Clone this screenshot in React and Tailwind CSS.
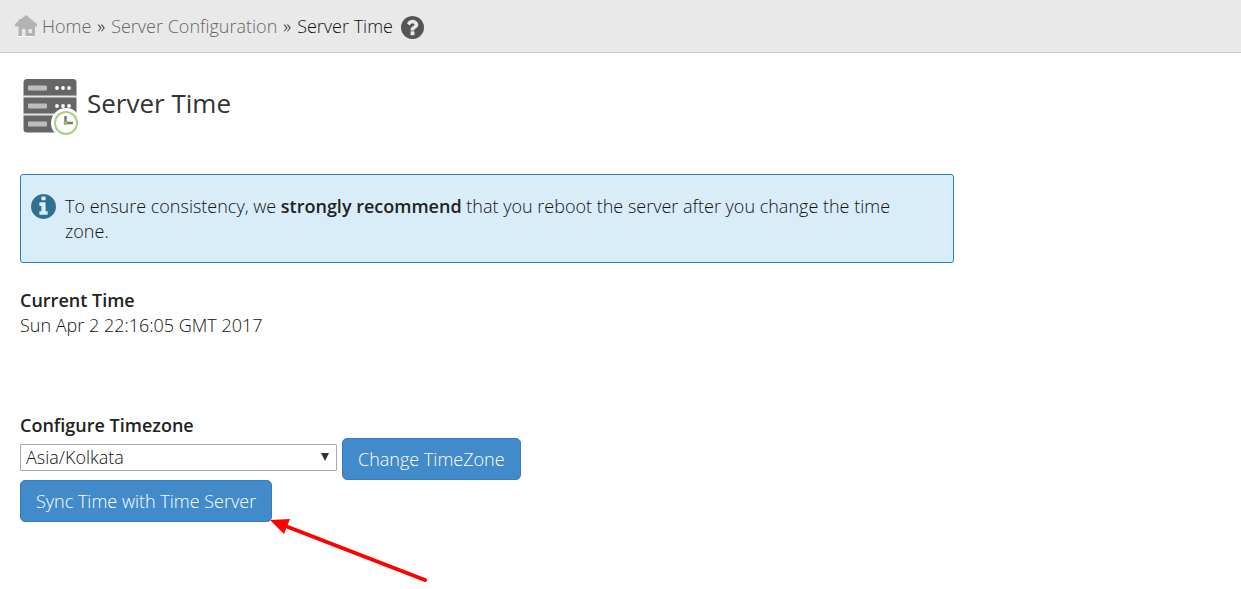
import { useState } from 'react';

const timezones = ['Asia/Kolkata', 'Asia/Dubai', 'Europe/London', 'America/New_York', 'UTC'];

const HomeIcon = () => (
  <svg width="22" height="22" viewBox="0 0 22 22" className="shrink-0" aria-hidden="true">
    <path fill="#f7f7f7" d="M3 21h16v1H3z" />
    <path
      fill="#b3b3b3"
      fillRule="evenodd"
      d="M11 0 22 9v2.5h-2V21h-9.5v-7H7v7H3.5v-9.5H0V9L4 5.500V4h2zM13.500 14v4h3.500v-4z"
    />
  </svg>
);

const HelpIcon = () => (
  <svg width="23" height="23" viewBox="128 128 1536 1536" fill="#555" aria-hidden="true">
    <path d="M1024 1376v-192q0-14-9-23t-23-9h-192q-14 0-23 9t-9 23v192q0 14 9 23t23 9h192q14 0 23-9t9-23zm256-672q0-88-55.5-163t-138.5-116-170-41q-243 0-371 213-15 24 8 42l132 100q7 6 19 6 16 0 25-12 53-68 86-92 34-24 86-24 48 0 85.5 26t37.5 59q0 38-20 61t-68 45q-63 28-115.5 86.5t-52.5 125.5v36q0 14 9 23t23 9h192q14 0 23-9t9-23q0-19 21.5-49.5t54.5-49.5q32-18 49-28.5t46-35 44.5-48 28-60.5 12.5-81zm384 192q0 209-103 385.5t-279.5 279.5-385.5 103-385.5-103-279.5-279.5-103-385.5 103-385.5 279.5-279.5 385.5-103 385.5 103 279.5 279.5 103 385.5z" />
  </svg>
);

const InfoIcon = () => (
  <svg width="25" height="25" viewBox="128 128 1536 1536" fill="#31708f" className="shrink-0" aria-hidden="true">
    <path d="M1152 1376v-160q0-14-9-23t-23-9h-96v-512q0-14-9-23t-23-9h-320q-14 0-23 9t-9 23v160q0 14 9 23t23 9h96v320h-96q-14 0-23 9t-9 23v160q0 14 9 23t23 9h448q14 0 23-9t9-23zm-128-896v-160q0-14-9-23t-23-9h-192q-14 0-23 9t-9 23v160q0 14 9 23t23 9h192q14 0 23-9t9-23zm640 416q0 209-103 385.5t-279.5 279.5-385.5 103-385.5-103-279.5-279.5-103-385.5 103-385.5 279.5-279.5 385.5-103 385.5 103 279.5 279.5 103 385.5z" />
  </svg>
);

// Rack with a clock badge in the corner
const ServerTimeIcon = () => (
  <svg width="60" height="60" viewBox="0 0 60 60" className="shrink-0" aria-hidden="true">
    <rect x="3.5" y="3" width="53" height="53.5" rx="3.5" fill="#666" />
    <path d="M3 20.5h54M3 38.5h54" stroke="#e4e4e4" strokeWidth="2" />
    {[12, 30, 48].map((y) => (
      <rect key={y} x="8" y={y - 2.5} width="19" height="5" rx="1" fill="#bdbdbd" />
    ))}
    {[12, 30].map((y) =>
      [37, 43, 49].map((x) => <circle key={`${x}-${y}`} cx={x} cy={y} r="1.9" fill="#fff" />)
    )}
    <circle cx="46" cy="47" r="15" fill="#fff" />
    <circle cx="46" cy="47" r="11" fill="#fff" stroke="#a8cf84" strokeWidth="2" />
    <path d="M45.5 40v7H53" fill="none" stroke="#777" strokeWidth="2.5" />
    <circle cx="45.5" cy="47" r="2" fill="#8bbf5c" />
  </svg>
);

const Arrow = () => (
  <svg
    width="160"
    height="64"
    viewBox="0 0 160 64"
    className="absolute left-full top-full -ml-0.5 -mt-1 pointer-events-none max-w-none"
    aria-hidden="true"
  >
    <path d="M18 9 155 62" stroke="#f00" strokeWidth="4" strokeLinecap="round" />
    <path d="M0 2 20 1 14 16z" fill="#f00" />
  </svg>
);

const buttonClass =
  'h-[42px] px-[15px] rounded-[5px] border border-[#357ebd] bg-[#428bca] hover:bg-[#3071a9] text-white text-lg whitespace-nowrap cursor-pointer';

const App = () => {
  const [timezone, setTimezone] = useState('Asia/Kolkata');

  return (
    <div className="min-h-screen bg-white text-[#111] text-lg leading-[25px] font-light font-['Open_Sans',sans-serif]">
      <nav className="flex items-center gap-[6px] h-[53px] px-[15px] bg-[#e9e9e9] border-b border-[#ccc]" aria-label="Breadcrumb">
        <a href="#home" className="flex items-center gap-[5px] text-[#666]">
          <HomeIcon />
          Home
        </a>
        <span>»</span>
        <a href="#server-configuration" className="text-[#666]">Server Configuration</a>
        <span>»</span>
        <span>Server Time</span>
        <a href="#help" aria-label="Help" className="pl-[2px] pt-[2px]">
          <HelpIcon />
        </a>
      </nav>

      <main className="px-5 pt-[23px]">
        <div className="flex items-center gap-[7px]">
          <ServerTimeIcon />
          <h1 className="text-[26px] leading-8 pb-1.5 font-normal text-[#333]">Server Time</h1>
        </div>

        <div className="flex gap-[9px] mt-[38px] max-w-[934px] pl-[10px] pr-10 pt-[19px] pb-[18px] rounded-[3px] border border-[#2a80b9] bg-[#d9edf9]">
          <InfoIcon />
          <p>
            To ensure consistency, we <strong className="font-semibold text-[#222]">strongly recommend</strong> that you
            reboot the server after you change the time zone.
          </p>
        </div>

        <section className="mt-[25px]">
          <h2 className="font-semibold text-[#222]">Current Time</h2>
          <p>Sun Apr 2 22:16:05 GMT 2017</p>
        </section>

        <form className="mt-[75px]" onSubmit={(e) => e.preventDefault()}>
          <label htmlFor="timezone" className="block font-semibold text-[#222]">Configure Timezone</label>
          <div className="flex flex-wrap items-center gap-[5px]">
            <div className="pb-1">
              <div className="relative w-[317px]">
                <select
                  id="timezone"
                  value={timezone}
                  onChange={(e) => setTimezone(e.target.value)}
                  className="block appearance-none w-full h-[27px] pl-[5px] pr-6 border border-[#a9a9a9] rounded-[1px] bg-white leading-[25px]"
                >
                  {timezones.map((tz) => (
                    <option key={tz}>{tz}</option>
                  ))}
                </select>
                <svg width="8" height="8" viewBox="0 0 8 8" className="absolute right-2 top-[9px] pointer-events-none" aria-hidden="true">
                  <path d="M0 0h8L4 8z" fill="#333" />
                </svg>
              </div>
            </div>
            <button type="submit" className={buttonClass}>Change TimeZone</button>
          </div>
          <div className="relative inline-block">
            <button type="button" className={buttonClass}>Sync Time with Time Server</button>
            <Arrow />
          </div>
        </form>
      </main>
    </div>
  );
};

export default App;
